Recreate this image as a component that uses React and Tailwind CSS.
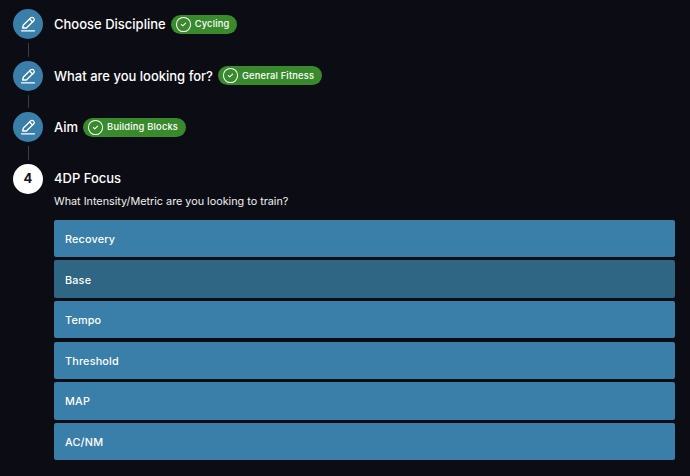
import { CircleCheck } from 'lucide-react';

const pasos = [
  { titulo: 'Choose Discipline', valor: 'Cycling' },
  { titulo: 'What are you looking for?', valor: 'General Fitness' },
  { titulo: 'Aim', valor: 'Building Blocks' },
];

const opciones = ['Recovery', 'Base', 'Tempo', 'Threshold', 'MAP', 'AC/NM'];

// pencil over a full-width baseline
function Lapiz() {
  return (
    <svg width="18" height="18" viewBox="0 0 18 18" fill="none" stroke="currentColor" strokeWidth="1.3" strokeLinejoin="round" strokeLinecap="round">
      <path d="M3.6 13 L4.4 10 L11.8 2.8 C12.5 2.1 13.5 2.1 14.2 2.8 L14.8 3.4 C15.5 4.1 15.5 5.1 14.8 5.8 L7.4 13 Z" />
      <path d="M10.6 4 L13.6 7" />
      <path d="M2.5 15.8 H15.5" />
    </svg>
  );
}

export default function App() {
  return (
    <div className="w-[690px] h-[476px] overflow-hidden bg-[#0c0d14] text-white font-['Inter',sans-serif] pt-[9px] pl-[13px] pr-[15px]">
      {pasos.map(({ titulo, valor }) => (
        <div key={titulo}>
          <div className="flex items-center h-[30px]">
            <div className="w-[30px] h-[30px] rounded-full bg-[#3a7eaa] flex items-center justify-center">
              <Lapiz />
            </div>
            <h3 className="ml-[11px] text-[13px] leading-[20px] font-medium">{titulo}</h3>
            <span className="ml-[5px] h-[19px] flex items-center rounded-full bg-[#388a2c] pl-[4px] pr-[8px] text-[9.3px] font-medium tracking-[0.2px]">
              <CircleCheck size={17} strokeWidth={1.5} className="mr-[3px]" />
              {valor}
            </span>
          </div>
          <div className="w-[30px] h-[21.5px] flex justify-center py-[4px]">
            <div className="w-px bg-[#3b3e45]" />
          </div>
        </div>
      ))}

      <div className="flex">
        <div className="w-[30px] h-[30px] rounded-full bg-white text-[#14161c] flex items-center justify-center text-[13px] font-bold shrink-0">
          4
        </div>
        <div className="ml-[11px] flex-1">
          <h3 className="h-[30px] flex items-center text-[13px] font-medium">4DP Focus</h3>
          <p className="text-[10.8px] leading-[16px] text-[#f0f0f0]">What Intensity/Metric are you looking to train?</p>
          <div className="mt-[10.4px] flex flex-col gap-[3.2px]">
            {opciones.map((o) => (
              <button
                key={o}
                className={`h-[37.4px] rounded-[2px] px-[11px] pt-[3px] text-left text-[10.8px] font-medium tracking-[0.2px] ${
                  o === 'Base' ? 'bg-[#2e6684]' : 'bg-[#3a7eaa]'
                }`}
              >
                {o}
              </button>
            ))}
          </div>
        </div>
      </div>
    </div>
  );
}
